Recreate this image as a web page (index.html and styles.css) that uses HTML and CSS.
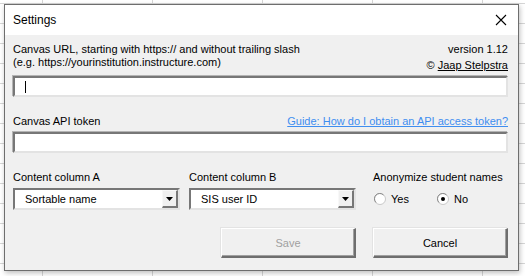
FILE: index.html
```html
<!DOCTYPE html>
<html>
<head>
<meta charset="utf-8">
<link rel="stylesheet" href="styles.css">
</head>
<body>
<div class="window">
  <div class="titlebar">
    <span class="title">Settings</span>
    <svg class="close" width="12" height="12" viewBox="0 0 12 12"><path d="M1 1 L11 11 M11 1 L1 11" stroke="#000" stroke-width="1.1" fill="none"/></svg>
  </div>
  <div class="content">
    <div class="head">
      <div class="url-label">
        <div>Canvas URL, starting with https:// and without trailing slash</div>
        <div>(e.g. https://yourinstitution.instructure.com)</div>
      </div>
      <div class="credits">
        <div>version 1.12</div>
        <div class="author">© <span class="ul">Jaap Stelpstra</span></div>
      </div>
    </div>
    <div class="textbox"><span class="caret"></span></div>
    <div class="labelrow">
      <span>Canvas API token</span>
      <span class="guide">Guide: How do I obtain an API access token?</span>
    </div>
    <div class="textbox"></div>
    <div class="options">
      <div class="field">
        <div class="label">Content column A</div>
        <div class="combo"><span class="value">Sortable name</span><span class="dropbtn"><svg width="7" height="4" viewBox="0 0 7 4"><path d="M0 0 H7 L3.5 4 Z" fill="#000"/></svg></span></div>
      </div>
      <div class="field">
        <div class="label">Content column B</div>
        <div class="combo"><span class="value">SIS user ID</span><span class="dropbtn"><svg width="7" height="4" viewBox="0 0 7 4"><path d="M0 0 H7 L3.5 4 Z" fill="#000"/></svg></span></div>
      </div>
      <div class="field anon">
        <div class="label">Anonymize student names</div>
        <div class="radios">
          <label class="radio"><svg width="12" height="12" viewBox="0 0 12 12"><circle cx="6" cy="6" r="5.5" fill="#fff" stroke="#c8c8c8"/><path d="M2 9.5 A5 5 0 0 1 9.5 2" stroke="#8a8a8a" fill="none"/></svg>Yes</label>
          <label class="radio"><svg width="12" height="12" viewBox="0 0 12 12"><circle cx="6" cy="6" r="5.5" fill="#fff" stroke="#c8c8c8"/><path d="M2 9.5 A5 5 0 0 1 9.5 2" stroke="#8a8a8a" fill="none"/><circle cx="6" cy="6" r="2" fill="#000"/></svg>No</label>
        </div>
      </div>
    </div>
    <div class="buttons">
      <div class="btn disabled">Save</div>
      <div class="btn">Cancel</div>
    </div>
  </div>
</div>
</body>
</html>
```

FILE: styles.css
```css
html, body {
  margin: 0;
  padding: 0;
}
body {
  width: 525px;
  height: 276px;
  overflow: hidden;
  background-color: #fff;
  background-image:
    linear-gradient(to right, #d6d6d6 1px, transparent 1px),
    linear-gradient(to bottom, #d6d6d6 1px, transparent 1px);
  background-size: 110px 20px;
  background-position: 42px 3px;
  font-family: "Liberation Sans", Arial, sans-serif;
  font-size: 11px;
  color: #000;
}
.window {
  box-sizing: border-box;
  margin: 4px 0 0 4px;
  width: 515px;
  height: 267px;
  border: 1px solid #6e6e6e;
  background: #f0f0f0;
  box-shadow: 1px 2px 5px rgba(0, 0, 0, 0.25);
  display: flex;
  flex-direction: column;
}
.titlebar {
  height: 30px;
  background: #fff;
  display: flex;
  align-items: center;
  justify-content: space-between;
  padding: 0 8px 0 8px;
}
.title {
  font-size: 12px;
}
.close {
  display: block;
  margin-right: 3px;
}
.content {
  padding: 8px 10px 0 8px;
  display: flex;
  flex-direction: column;
}
.head {
  display: flex;
  justify-content: space-between;
  height: 29px;
  line-height: 13px;
}
.credits {
  text-align: right;
}
.author {
  margin-top: 3px;
}
.ul {
  text-decoration: underline;
}
.textbox {
  box-sizing: border-box;
  margin-top: 4px;
  height: 21px;
  background: #fff;
  border-top: 2px solid #777;
  border-left: 2px solid #777;
  border-right: 2px solid #e3e3e3;
  border-bottom: 2px solid #e3e3e3;
  box-shadow: -1px -1px 0 #b4b4b4;
  position: relative;
}
.caret {
  position: absolute;
  left: 10px;
  top: 3px;
  width: 1px;
  height: 12px;
  background: #000;
}
.labelrow {
  margin-top: 18px;
  height: 13px;
  line-height: 13px;
  display: flex;
  justify-content: space-between;
}
.guide {
  color: #3f8ef0;
  text-decoration: underline;
}
.options {
  margin-top: 18px;
  display: grid;
  grid-template-columns: 167px 167px 1fr;
  column-gap: 9px;
}
.anon {
  margin-left: 8px;
  white-space: nowrap;
}
.label {
  height: 13px;
  line-height: 13px;
}
.combo {
  box-sizing: border-box;
  margin-top: 4px;
  height: 22px;
  background: #fff;
  border-top: 2px solid #777;
  border-left: 2px solid #777;
  border-right: 2px solid #e3e3e3;
  border-bottom: 2px solid #e3e3e3;
  display: flex;
  align-items: center;
  justify-content: space-between;
}
.value {
  padding-left: 10px;
}
.dropbtn {
  box-sizing: border-box;
  width: 16px;
  height: 18px;
  background: #f0f0f0;
  border-top: 1px solid #f8f8f8;
  border-left: 1px solid #f8f8f8;
  border-right: 2px solid #777;
  border-bottom: 2px solid #777;
  display: flex;
  align-items: center;
  justify-content: center;
}
.dropbtn svg {
  display: block;
}
.radios {
  margin-top: 4px;
  height: 22px;
  display: flex;
  align-items: center;
  padding-left: 1px;
}
.radio {
  display: flex;
  align-items: center;
  gap: 5px;
  width: 63px;
}
.radio svg {
  display: block;
}
.buttons {
  margin-top: 18px;
  display: flex;
  justify-content: flex-end;
  gap: 17px;
}
.btn {
  box-sizing: border-box;
  width: 135px;
  height: 30px;
  display: flex;
  align-items: center;
  justify-content: center;
  background: #f0f0f0;
  border-top: 1px solid #fff;
  border-left: 1px solid #fff;
  border-right: 2px solid #6e6e6e;
  border-bottom: 2px solid #6e6e6e;
  box-shadow: inset -1px -1px 0 #a0a0a0, -1px -1px 0 #e3e3e3;
  font-size: 11px;
}
.btn.disabled {
  color: #a0a0a0;
}
```
